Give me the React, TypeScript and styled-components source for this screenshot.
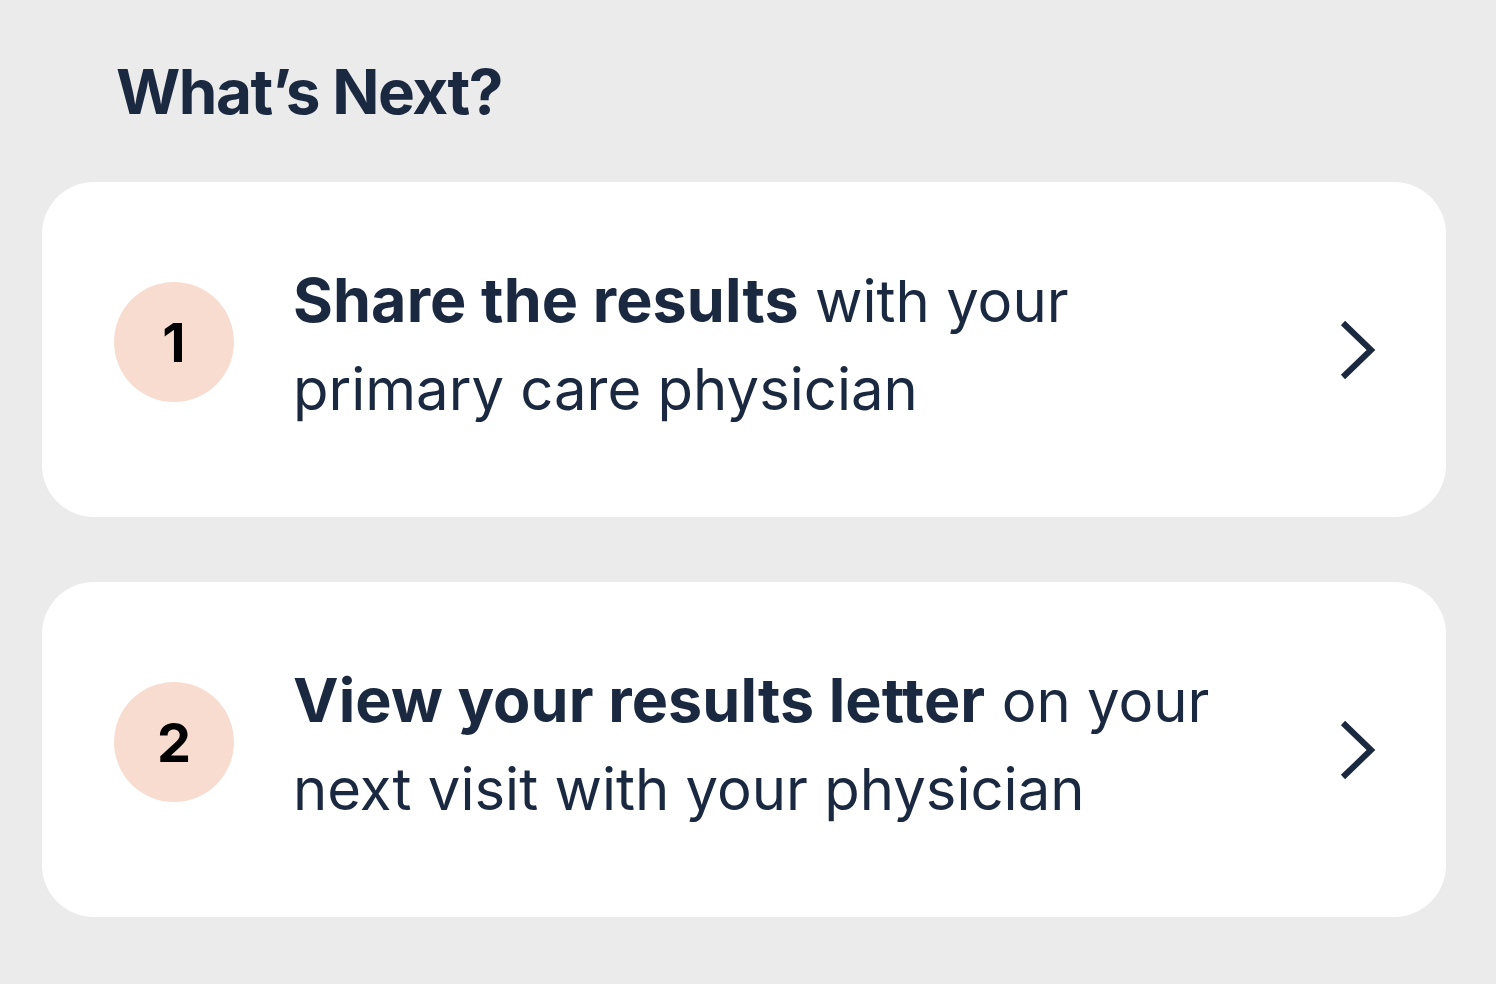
import styled, { createGlobalStyle } from "styled-components";

const GlobalStyle = createGlobalStyle`
  body {
    margin: 0;
    background: #ebebeb;
    font-family: Inter, "Noto Sans", sans-serif;
  }
`;

const Page = styled.div`
  width: 1496px;
  height: 984px;
  box-sizing: border-box;
  padding: 50px 50px 0 42px;
  background: #ebebeb;
`;

const Title = styled.h1`
  margin: 0 0 48px 74px;
  font-size: 62px;
  line-height: 84px;
  font-weight: 700;
  color: #1a2840;
  letter-spacing: -1.5px;
`;

const StepList = styled.div`
  display: flex;
  flex-direction: column;
  gap: 65px;
`;

const StepCard = styled.div`
  display: flex;
  align-items: center;
  height: 335px;
  box-sizing: border-box;
  padding: 0 68px 0 72px;
  background: #ffffff;
  border-radius: 52px;
`;

const Badge = styled.div`
  flex: none;
  width: 120px;
  height: 120px;
  margin-bottom: 15px;
  border-radius: 50%;
  background: #f8dccf;
  display: flex;
  align-items: center;
  justify-content: center;
  font-size: 54px;
  font-weight: 700;
  color: #000;
`;

const StepText = styled.p`
  flex: 1;
  margin: 0 0 10px 59px;
  font-size: 58px;
  line-height: 88px;
  font-weight: 400;
  color: #1a2840;
  max-width: 940px;

  strong {
    font-size: 61px;
    font-weight: 700;
    letter-spacing: 0.1px;
  }
`;

const Chevron = styled.svg`
  flex: none;
  width: 40px;
  height: 60px;
  margin-left: auto;
`;

const steps = [
  { n: 1, bold: "Share the results", rest: "with your primary care physician" },
  { n: 2, bold: "View your results letter", rest: "on your next visit with your physician" },
];

function App() {
  return (
    <Page>
      <GlobalStyle />
      <Title>What’s Next?</Title>
      <StepList>
        {steps.map((s) => (
          <StepCard key={s.n}>
            <Badge>{s.n}</Badge>
            <StepText>
              <strong>{s.bold}</strong> {s.rest}
            </StepText>
            <Chevron viewBox="0 0 40 60">
              <polyline
                points="5,3 33,30 5,57"
                fill="none"
                stroke="#1a2840"
                strokeWidth="6"
              />
            </Chevron>
          </StepCard>
        ))}
      </StepList>
    </Page>
  );
}

export default App;
